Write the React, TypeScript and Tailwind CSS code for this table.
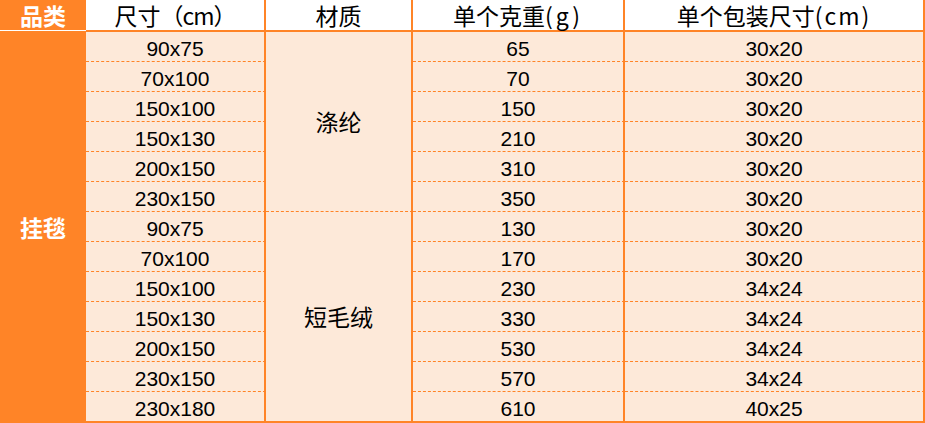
const ROWS = [
  { size: "90x75", weight: "65", pack: "30x20" },
  { size: "70x100", weight: "70", pack: "30x20" },
  { size: "150x100", weight: "150", pack: "30x20" },
  { size: "150x130", weight: "210", pack: "30x20" },
  { size: "200x150", weight: "310", pack: "30x20" },
  { size: "230x150", weight: "350", pack: "30x20" },
  { size: "90x75", weight: "130", pack: "30x20" },
  { size: "70x100", weight: "170", pack: "30x20" },
  { size: "150x100", weight: "230", pack: "34x24" },
  { size: "150x130", weight: "330", pack: "34x24" },
  { size: "200x150", weight: "530", pack: "34x24" },
  { size: "230x150", weight: "570", pack: "34x24" },
  { size: "230x180", weight: "610", pack: "40x25" },
];

// body cell: peach fill, solid orange right rule, dashed orange bottom rule
const body =
  "flex items-center justify-center leading-none bg-[#fde9d9] border-solid border-[#ff8427] border-r-2 text-black";
const dashed = "border-b [border-bottom-style:dashed]";
const solid = "border-b-2";

const cjk = "font-['Noto_Sans_CJK_SC',sans-serif]";

export default function App() {
  const head = `flex items-center justify-center leading-none bg-white border-solid border-[#ff8427] border-r-2 border-b-2 text-[23px] text-black ${cjk}`;

  return (
    <div className="w-[925px] h-[423px] bg-white font-['Liberation_Sans','Noto_Sans_CJK_SC',sans-serif]">
      <div className="grid grid-cols-[86px_180px_147px_212px_300px] grid-rows-[32px_repeat(12,30px)_31px]">
        {/* header */}
        <div className="flex flex-col bg-[#ff8427]">
          <div className={`flex h-[30px] items-center justify-center leading-none text-[23px] font-bold text-white ${cjk}`}>
            品类
          </div>
          <div className="h-px bg-white" />
        </div>
        <div className={head}>
          尺寸<span className="tracking-[-1px]">（cm）</span>
        </div>
        <div className={head}>材质</div>
        <div className={head}>
          单个克重<span className="tracking-[3px]">(g)</span>
        </div>
        <div className={head}>
          单个包装尺寸<span className="tracking-[2px]">(cm)</span>
        </div>

        {/* category column */}
        <div className={`col-start-1 row-start-2 row-span-13 flex items-center justify-center bg-[#ff8427] text-[23px] font-bold text-white ${cjk}`}>
          挂毯
        </div>

        {/* material, merged cells */}
        <div className={`col-start-3 row-start-2 row-span-6 ${body} ${dashed} text-[23px] ${cjk}`}>
          涤纶
        </div>
        <div className={`col-start-3 row-start-8 row-span-7 ${body} ${solid} text-[23px] ${cjk}`}>
          短毛绒
        </div>

        {ROWS.map((r, i) => {
          const edge = i === ROWS.length - 1 ? solid : dashed;
          const row = { gridRowStart: i + 2 };
          const cell = `${body} ${edge} pt-[3px] text-[21px]`;
          return [
            <div key={`s${i}`} className={`col-start-2 ${cell}`} style={row}>
              {r.size}
            </div>,
            <div key={`w${i}`} className={`col-start-4 ${cell}`} style={row}>
              {r.weight}
            </div>,
            <div key={`p${i}`} className={`col-start-5 ${cell}`} style={row}>
              {r.pack}
            </div>,
          ];
        })}
      </div>
    </div>
  );
}
